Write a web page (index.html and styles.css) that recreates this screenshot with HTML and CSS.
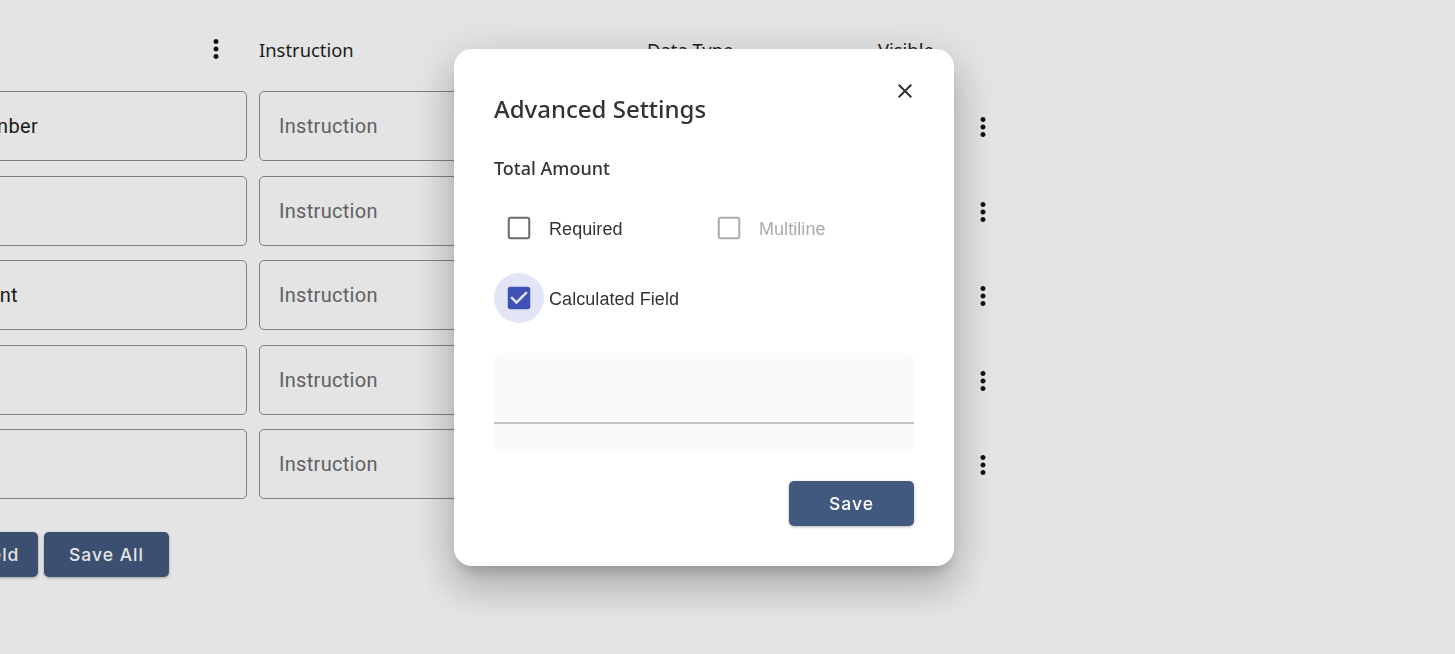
FILE: index.html
```html
<!DOCTYPE html>
<html lang="en">
<head>
    <meta charset="UTF-8">
    <meta name="viewport" content="width=device-width, initial-scale=1.0">
    <title>Advanced Settings</title>
    <link rel="stylesheet" href="styles.css">
</head>
<body>
    <div class="page">
        <div class="field-row header-row">
            <div class="head-name">
                <svg class="kebab" viewBox="0 0 24 24"><path d="M12 8c1.1 0 2-.9 2-2s-.9-2-2-2-2 .9-2 2 .9 2 2 2zm0 2c-1.1 0-2 .9-2 2s.9 2 2 2 2-.9 2-2-.9-2-2-2zm0 6c-1.1 0-2 .9-2 2s.9 2 2 2 2-.9 2-2-.9-2-2-2z"/></svg>
            </div>
            <div>Instruction</div>
            <div>Data Type</div>
            <div>Visible</div>
            <div></div>
        </div>

        <div class="field-row">
            <div class="input name-input">Invoice Number</div>
            <div class="input placeholder">Instruction</div>
            <div></div>
            <div></div>
            <svg class="kebab" viewBox="0 0 24 24"><path d="M12 8c1.1 0 2-.9 2-2s-.9-2-2-2-2 .9-2 2 .9 2 2 2zm0 2c-1.1 0-2 .9-2 2s.9 2 2 2 2-.9 2-2-.9-2-2-2zm0 6c-1.1 0-2 .9-2 2s.9 2 2 2 2-.9 2-2-.9-2-2-2z"/></svg>
        </div>
        <div class="field-row">
            <div class="input name-input"></div>
            <div class="input placeholder">Instruction</div>
            <div></div>
            <div></div>
            <svg class="kebab" viewBox="0 0 24 24"><path d="M12 8c1.1 0 2-.9 2-2s-.9-2-2-2-2 .9-2 2 .9 2 2 2zm0 2c-1.1 0-2 .9-2 2s.9 2 2 2 2-.9 2-2-.9-2-2-2zm0 6c-1.1 0-2 .9-2 2s.9 2 2 2 2-.9 2-2-.9-2-2-2z"/></svg>
        </div>
        <div class="field-row">
            <div class="input name-input">Total Amount</div>
            <div class="input placeholder">Instruction</div>
            <div></div>
            <div></div>
            <svg class="kebab" viewBox="0 0 24 24"><path d="M12 8c1.1 0 2-.9 2-2s-.9-2-2-2-2 .9-2 2 .9 2 2 2zm0 2c-1.1 0-2 .9-2 2s.9 2 2 2 2-.9 2-2-.9-2-2-2zm0 6c-1.1 0-2 .9-2 2s.9 2 2 2 2-.9 2-2-.9-2-2-2z"/></svg>
        </div>
        <div class="field-row">
            <div class="input name-input"></div>
            <div class="input placeholder">Instruction</div>
            <div></div>
            <div></div>
            <svg class="kebab" viewBox="0 0 24 24"><path d="M12 8c1.1 0 2-.9 2-2s-.9-2-2-2-2 .9-2 2 .9 2 2 2zm0 2c-1.1 0-2 .9-2 2s.9 2 2 2 2-.9 2-2-.9-2-2-2zm0 6c-1.1 0-2 .9-2 2s.9 2 2 2 2-.9 2-2-.9-2-2-2z"/></svg>
        </div>
        <div class="field-row">
            <div class="input name-input"></div>
            <div class="input placeholder">Instruction</div>
            <div></div>
            <div></div>
            <svg class="kebab" viewBox="0 0 24 24"><path d="M12 8c1.1 0 2-.9 2-2s-.9-2-2-2-2 .9-2 2 .9 2 2 2zm0 2c-1.1 0-2 .9-2 2s.9 2 2 2 2-.9 2-2-.9-2-2-2zm0 6c-1.1 0-2 .9-2 2s.9 2 2 2 2-.9 2-2-.9-2-2-2z"/></svg>
        </div>

        <div class="page-actions">
            <button class="btn add-btn">Add Field</button>
            <button class="btn">Save All</button>
        </div>
    </div>

    <div class="backdrop">
        <div class="modal">
            <button class="close-btn">
                <svg viewBox="0 0 24 24"><path d="M19 6.41 17.59 5 12 10.59 6.41 5 5 6.41 10.59 12 5 17.59 6.41 19 12 13.41 17.59 19 19 17.59 13.41 12z"/></svg>
            </button>
            <h2 class="modal-title">Advanced Settings</h2>
            <div class="modal-subtitle">Total Amount</div>

            <div class="check-grid">
                <label class="check">
                    <span class="check-icon">
                        <svg viewBox="0 0 24 24"><path d="M19.4 4.6v14.8H4.6V4.6h14.8m-.4-1.6H5c-1.1 0-2 .9-2 2v14c0 1.1.9 2 2 2h14c1.1 0 2-.9 2-2V5c0-1.1-.9-2-2-2z"/></svg>
                    </span>
                    Required
                </label>
                <label class="check disabled">
                    <span class="check-icon">
                        <svg viewBox="0 0 24 24"><path d="M19.4 4.6v14.8H4.6V4.6h14.8m-.4-1.6H5c-1.1 0-2 .9-2 2v14c0 1.1.9 2 2 2h14c1.1 0 2-.9 2-2V5c0-1.1-.9-2-2-2z"/></svg>
                    </span>
                    Multiline
                </label>
                <label class="check checked">
                    <span class="check-icon">
                        <svg viewBox="0 0 24 24"><path d="M19 3H5c-1.11 0-2 .9-2 2v14c0 1.1.89 2 2 2h14c1.11 0 2-.9 2-2V5c0-1.1-.89-2-2-2zm-9 14-5-5 1.41-1.41L10 14.17l7.59-7.59L19 8l-9 9z"/></svg>
                    </span>
                    Calculated Field
                </label>
            </div>

            <div class="formula-field">
                <div class="formula-input"></div>
            </div>

            <div class="modal-actions">
                <button class="btn">Save</button>
            </div>
        </div>
    </div>
</body>
</html>
```

FILE: styles.css
```css
* {
    box-sizing: border-box;
}

html,
body {
    height: 100%;
}

body {
    margin: 0;
    overflow: hidden;
    background: #fff;
    color: #222;
    font-family: Roboto, "Liberation Sans", sans-serif;
}

.page {
    margin-left: -120px;
    padding-top: 25px;
}

.field-row {
    display: grid;
    grid-template-columns: 367px 376px 219px 78px 30px;
    column-gap: 12px;
    align-items: center;
    height: 70px;
    margin-bottom: 14.5px;
}

.field-row > .kebab {
    margin-top: 2px;
}

.header-row {
    height: 48px;
    margin-bottom: 18px;
    font-family: "Noto Sans", sans-serif;
    font-size: 18.4px;
    color: #1f1f1f;
}

.head-name {
    display: flex;
    justify-content: flex-end;
    padding-right: 16px;
}

.kebab {
    width: 30px;
    height: 30px;
    fill: #111;
    display: block;
}

.input {
    height: 70px;
    padding: 0 19px;
    display: flex;
    align-items: center;
    border: 1px solid #8f8f8f;
    border-radius: 5px;
    font-size: 20px;
    letter-spacing: 0.3px;
    white-space: nowrap;
}

.name-input {
    padding-left: 13px;
}

.placeholder {
    color: #6c6c6c;
}

.page-actions {
    display: flex;
    gap: 6px;
    justify-content: flex-end;
    width: 289px;
    margin-top: 33px;
}

.btn {
    width: 125px;
    height: 45px;
    border: 0;
    border-radius: 5px;
    background: #42597f;
    color: #fff;
    font-family: Inter, sans-serif;
    font-size: 17.5px;
    font-weight: 500;
    letter-spacing: 1px;
    box-shadow: 0 1px 3px rgba(0, 0, 0, 0.3);
}

.backdrop {
    position: fixed;
    inset: 0;
    background: rgba(0, 0, 0, 0.106);
}

.modal {
    position: absolute;
    left: 454px;
    top: 49px;
    width: 500px;
    height: 517px;
    padding: 40px;
    background: #fff;
    border-radius: 18px;
    box-shadow: 0 11px 15px -7px rgba(0, 0, 0, 0.2), 0 24px 38px 3px rgba(0, 0, 0, 0.14), 0 9px 46px 8px rgba(0, 0, 0, 0.12);
}

.close-btn {
    position: absolute;
    top: 30px;
    right: 37px;
    width: 24px;
    height: 24px;
    padding: 0;
    border: 0;
    background: none;
}

.close-btn svg {
    display: block;
    fill: #333;
}

.modal-title {
    margin: 0;
    font-family: "Noto Sans", sans-serif;
    font-size: 24px;
    font-weight: 500;
    line-height: 40px;
    color: #333;
}

.modal-subtitle {
    margin-top: 27px;
    font-family: "Noto Sans", sans-serif;
    font-size: 18px;
    font-weight: 500;
    line-height: 24px;
    color: #333;
}

.check-grid {
    display: grid;
    grid-template-columns: 210px 210px;
    row-gap: 20px;
    margin-top: 24px;
}

.check {
    display: flex;
    align-items: center;
    height: 50px;
    font-family: "Liberation Sans", sans-serif;
    font-size: 18px;
    letter-spacing: 0.06px;
    color: #333;
}

.check-icon {
    align-self: flex-start;
    width: 50px;
    height: 50px;
    padding: 10px;
    margin-top: -1px;
    margin-right: 5px;
    border-radius: 50%;
}

.check-icon svg {
    display: block;
    width: 30px;
    height: 30px;
    fill: #6a6a6a;
}

.check.disabled {
    color: #aaa;
}

.check.disabled svg {
    fill: #aaa;
}

.check.checked .check-icon {
    background: #e2e5f5;
}

.check.checked svg {
    fill: #3f51b5;
}

.formula-field {
    height: 98px;
    margin-top: 29px;
    background: #fafafa;
    border-radius: 8px;
}

.formula-input {
    height: 71px;
    border-bottom: 2px solid #c2c2c2;
}

.modal-actions {
    display: flex;
    justify-content: flex-end;
    margin-top: 30px;
}
```
